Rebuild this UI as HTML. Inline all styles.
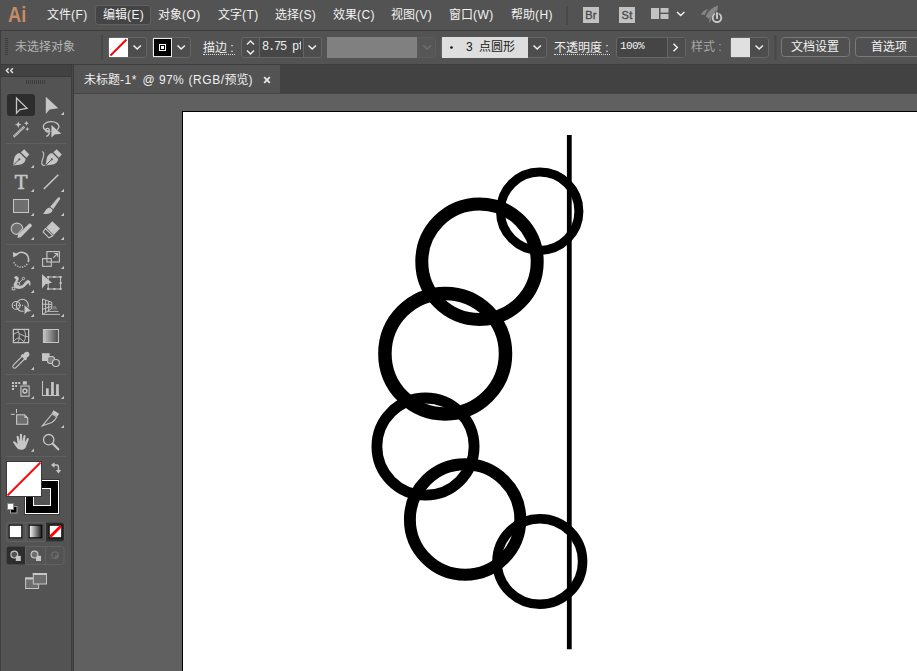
<!DOCTYPE html>
<html><head><meta charset="utf-8">
<style>
html,body{margin:0;padding:0;}
body{width:917px;height:671px;overflow:hidden;background:#5e5e5e;position:relative;font-family:"Liberation Sans","Noto Sans CJK SC",sans-serif;font-size:12px;color:#f0f0f0;}
.abs{position:absolute;}
#menubar{left:0;top:0;width:917px;height:30px;background:#535353;}
#menubar .mi{position:absolute;top:0;height:30px;line-height:31px;font-size:12px;color:#f2f2f2;white-space:nowrap;}
#ctrl{left:0;top:30px;width:917px;height:34px;background:#535353;border-top:1px solid #3c3c3c;box-sizing:border-box;}
#ctrl .t{position:absolute;white-space:nowrap;font-size:12px;line-height:20px;top:6px;height:20px;}
.grp{position:absolute;top:6px;height:21px;box-sizing:border-box;border:1px solid #6a6a6a;border-radius:3px;}
#tabbar{left:74px;top:64px;width:843px;height:30px;background:#424242;border-top:1px solid #3d3d3d;border-bottom:1px solid #454545;box-sizing:border-box;}
#tab{left:0;top:0;width:206px;height:28px;background:#535353;}
#tools{left:0;top:64px;width:74px;height:607px;background:#535353;border-top:1px solid #3a3a3a;box-sizing:border-box;}
#canvas{left:74px;top:94px;width:843px;height:577px;background:#606060;}
.la{letter-spacing:0.4px;}
.tt{top:1px;height:28px;line-height:28px;font-size:12px;color:#f0f0f0;white-space:nowrap;}
</style></head><body>
<div id="canvas" class="abs"></div>
<div id="art" class="abs" style="left:182px;top:111px;width:740px;height:570px;background:#fff;border:1px solid #000;box-sizing:border-box;"></div>
<svg class="abs" style="left:0;top:0" width="917" height="671" viewBox="0 0 917 671">
<g fill="none" stroke="#000">
<line x1="569.3" y1="135" x2="569.3" y2="649.3" stroke-width="4.8"/>
<circle cx="539.7" cy="211.2" r="39.2" stroke-width="9"/>
<circle cx="479.5" cy="261.7" r="57.7" stroke-width="13"/>
<circle cx="445.2" cy="353.7" r="60.3" stroke-width="13.5"/>
<circle cx="425.5" cy="446.6" r="48.6" stroke-width="10.8"/>
<circle cx="465.1" cy="519.5" r="55.2" stroke-width="11.9"/>
<circle cx="539.8" cy="561.5" r="42.8" stroke-width="9.5"/>
</g>
</svg>
<div id="menubar" class="abs">
<div class="mi" style="left:8.300px;top:-1px;font-size:22.800px;font-weight:bold;color:#c68c63;transform:scaleX(0.800);transform-origin:0 0;line-height:30px;">Ai</div>
<div class="mi" style="left:47px">文件<span class="la">(F)</span></div>
<div class="abs" style="left:95px;top:5px;width:56px;height:20px;box-sizing:border-box;border:1px solid #606060;border-radius:3px;background:#444;"></div>
<div class="mi" style="left:103px">编辑<span class="la">(E)</span></div>
<div class="mi" style="left:158px">对象<span class="la">(O)</span></div>
<div class="mi" style="left:218px">文字<span class="la">(T)</span></div>
<div class="mi" style="left:275px">选择<span class="la">(S)</span></div>
<div class="mi" style="left:333px">效果<span class="la">(C)</span></div>
<div class="mi" style="left:391px">视图<span class="la">(V)</span></div>
<div class="mi" style="left:449px">窗口<span class="la">(W)</span></div>
<div class="mi" style="left:511px">帮助<span class="la">(H)</span></div>
<div class="abs" style="left:566px;top:6px;width:2px;height:19px;background:#484848;"></div>
<div class="abs" style="left:583px;top:7px;width:16px;height:16px;background:#c2c2c2;color:#484848;font-size:11px;-webkit-text-stroke:0.350px #484848;line-height:17px;text-align:center;letter-spacing:0.2px;">Br</div>
<div class="abs" style="left:619px;top:7px;width:16px;height:16px;background:#c2c2c2;color:#484848;font-size:11px;-webkit-text-stroke:0.350px #484848;line-height:17px;text-align:center;letter-spacing:0.2px;">St</div>
<svg class="abs" style="left:645px;top:0" width="90" height="30" viewBox="645 0 90 30">
<rect x="651" y="8" width="8" height="11" fill="#c2c2c2"/><rect x="660.5" y="8" width="8" height="4.6" fill="#c2c2c2"/><rect x="660.5" y="14" width="8" height="5" fill="#c2c2c2"/>
<path d="M677 12 L680.7 15.5 L684.4 12" fill="none" stroke="#f0f0f0" stroke-width="1.5"/>
<path d="M718.100 5.700 C713 6.500 707.500 11.500 705.800 16.400 L708.800 18.800 C713.500 17 718 12 718.100 5.700 Z" fill="#858585"/>
<path d="M700.900 14.400 C702.500 11.500 705 9.500 708.300 9 C706.800 10.800 705.600 12.800 704.800 14.900 Z" fill="#858585"/>
<path d="M709.100 22.900 L709.300 19.200 L711.600 17.800 C711.600 19.800 710.600 21.600 709.100 22.900 Z" fill="#858585"/>
<circle cx="717" cy="17.700" r="5.400" fill="#535353"/>
<circle cx="717" cy="17.700" r="4.300" fill="none" stroke="#c8c8c8" stroke-width="1.900"/>
<rect x="715.200" y="11.400" width="3.600" height="6" fill="#535353"/>
<rect x="716" y="12.300" width="2" height="6.500" fill="#c8c8c8"/>
</svg>

</div>
<div id="ctrl" class="abs">
<svg class="abs" style="left:0;top:0" width="917" height="33" viewBox="0 31 917 33">
<g fill="#3c3c3c"><rect x="5" y="38" width="3" height="1"/><rect x="5" y="40" width="3" height="1"/><rect x="5" y="42" width="3" height="1"/><rect x="5" y="44" width="3" height="1"/><rect x="5" y="46" width="3" height="1"/><rect x="5" y="48" width="3" height="1"/><rect x="5" y="50" width="3" height="1"/><rect x="5" y="52" width="3" height="1"/><rect x="5" y="54" width="3" height="1"/></g>
<rect x="0" y="31" width="1" height="33" fill="#3e3e3e"/>
<rect x="101" y="35" width="2" height="25" fill="#474747"/>
<!-- fill group -->
<rect x="108.5" y="37.5" width="38" height="20" rx="2.5" fill="#4d4d4d" stroke="#666"/>
<rect x="109" y="38" width="19" height="19" fill="#fff"/>
<line x1="110.500" y1="55.500" x2="126.500" y2="39.500" stroke="#f00" stroke-width="2"/>
<path d="M133.500 45.500 L137.200 49 L140.900 45.500" fill="none" stroke="#f0f0f0" stroke-width="1.5"/>
<!-- stroke group -->
<rect x="152.500" y="37.500" width="38" height="20" rx="2.500" fill="#4d4d4d" stroke="#666"/>
<rect x="153.500" y="38.500" width="18" height="18" fill="#000" stroke="#e8e8e8"/>
<rect x="159.500" y="44.500" width="6" height="6" fill="none" stroke="#fff"/>
<rect x="161" y="46" width="3" height="3" fill="#fff"/>
<path d="M177.500 45.500 L181.200 49 L184.900 45.500" fill="none" stroke="#f0f0f0" stroke-width="1.5"/>
<!-- stroke weight -->
<rect x="241.500" y="37.500" width="80" height="20" rx="2.500" fill="#4d4d4d" stroke="#666"/>
<rect x="260" y="38" width="43.500" height="19" fill="#464646"/>
<line x1="259.500" y1="38" x2="259.500" y2="57" stroke="#666"/><line x1="303.500" y1="38" x2="303.500" y2="57" stroke="#666"/>
<path d="M247 44.500 L250.500 41 L254 44.500" fill="none" stroke="#f0f0f0" stroke-width="1.4"/>
<path d="M247 50.500 L250.500 54 L254 50.500" fill="none" stroke="#f0f0f0" stroke-width="1.4"/>
<path d="M308.500 45.500 L312.200 49 L315.900 45.500" fill="none" stroke="#f0f0f0" stroke-width="1.5"/>
<!-- gray bar -->
<rect x="327" y="37" width="90" height="21" fill="#808080"/>
<rect x="417.500" y="37.500" width="18" height="20" rx="2" fill="#565656" stroke="#5c5c5c"/>
<path d="M423.500 45.500 L427.200 49 L430.900 45.500" fill="none" stroke="#707070" stroke-width="1.5"/>
<!-- brush def -->
<rect x="441.500" y="37.500" width="105" height="20" rx="2.500" fill="#4d4d4d" stroke="#666"/>
<rect x="442" y="37" width="86" height="21" fill="#dedede"/>
<circle cx="451.500" cy="47.500" r="1.300" fill="#111"/>
<path d="M533.500 45.500 L537.200 49 L540.900 45.500" fill="none" stroke="#f0f0f0" stroke-width="1.5"/>
<!-- opacity -->
<rect x="616.500" y="37.500" width="69" height="20" rx="2.500" fill="#454545" stroke="#666"/>
<rect x="667.500" y="38" width="17.500" height="19" fill="#4d4d4d"/>
<line x1="667.500" y1="38" x2="667.500" y2="57" stroke="#666"/>
<path d="M673.500 43.700 L677.300 47.500 L673.500 51.300" fill="none" stroke="#f0f0f0" stroke-width="1.5"/>
<!-- style -->
<rect x="730.500" y="37.500" width="38" height="20" rx="2.500" fill="#4d4d4d" stroke="#666"/>
<rect x="731" y="38" width="19" height="19" fill="#e0e0e0"/>
<path d="M755.500 45.500 L759.200 49 L762.900 45.500" fill="none" stroke="#f0f0f0" stroke-width="1.5"/>
<rect x="774.500" y="35" width="2" height="25" fill="#474747"/>
<rect x="781.500" y="37.500" width="68" height="19" rx="3" fill="#505050" stroke="#7a7a7a"/>
<rect x="855.500" y="37.500" width="80" height="19" rx="3" fill="#505050" stroke="#7a7a7a"/>
</svg>
<div class="t" style="left:15px;color:#b4b4b4;">未选择对象</div>
<div class="t" style="left:203px;color:#f0f0f0;width:32px;border-bottom:1px dotted #ddd;height:16px;line-height:20px;top:7px;">描边 :</div>
<div class="t" style="left:262px;color:#ececec;font-family:'Liberation Mono','Noto Sans CJK SC',monospace;font-size:12px;width:38.500px;overflow:hidden;letter-spacing:-1.2px;">8.75 pt</div>
<div class="t" style="left:466px;color:#1a1a1a;">3</div>
<div class="t" style="left:479px;color:#1a1a1a;">点圆形</div>
<div class="t" style="left:554px;color:#f0f0f0;width:56px;border-bottom:1px dotted #ddd;height:16px;line-height:20px;top:7px;">不透明度 :</div>
<div class="t" style="left:620px;color:#f4f4f4;font-family:'Liberation Mono',monospace;font-size:11px;letter-spacing:-0.6px;top:5px;">100%</div>
<div class="t" style="left:691px;color:#a6a6a6;">样式 :</div>
<div class="t" style="left:791px;color:#f0f0f0;">文档设置</div>
<div class="t" style="left:871px;color:#f0f0f0;">首选项</div>
</div>
<div id="tabbar" class="abs"><div id="tab" class="abs"></div>
<div class="abs tt" style="left:10px;"><span>未标题</span><span style="letter-spacing:0.5px">-1*</span></div>
<div class="abs tt" style="left:68.500px;">@</div>
<div class="abs tt" style="left:85px;letter-spacing:0.3px">97%</div>
<div class="abs tt" style="left:114.500px;"><span style="letter-spacing:0.55px">(RGB/</span>预览<span>)</span></div>
<svg class="abs" style="left:188.500px;top:11px" width="8" height="8" viewBox="0 0 8 8"><path d="M1.200 1.200 L6.800 6.800 M6.800 1.200 L1.200 6.800" stroke="#e4e4e4" stroke-width="1.900" fill="none"/></svg>
</div>
<div id="tools" class="abs">
<svg class="abs" style="left:0;top:0" width="74" height="606" viewBox="0 65 74 606" font-family="'Liberation Serif',serif">
<rect x="0" y="65" width="71" height="11" fill="#424242"/>
<rect x="0" y="76" width="71" height="1" fill="#3a3a3a"/>
<rect x="71" y="65" width="3" height="606" fill="#3d3d3d"/><rect x="72" y="65" width="1" height="606" fill="#474747"/>
<rect x="0" y="65" width="1" height="606" fill="#3e3e3e"/>
<path d="M8.700 68.200 L6.500 70.600 L8.700 73 M12.900 68.200 L10.700 70.600 L12.900 73" fill="none" stroke="#e0e0e0" stroke-width="1.500"/>
<g fill="#3e3e3e"><rect x="26" y="80" width="1" height="4"/><rect x="28" y="80" width="1" height="4"/><rect x="30" y="80" width="1" height="4"/><rect x="32" y="80" width="1" height="4"/><rect x="34" y="80" width="1" height="4"/><rect x="36" y="80" width="1" height="4"/><rect x="38" y="80" width="1" height="4"/><rect x="40" y="80" width="1" height="4"/><rect x="42" y="80" width="1" height="4"/><rect x="44" y="80" width="1" height="4"/></g>
<g fill="#5f5f5f"><rect x="6" y="143" width="60" height="1"/><rect x="6" y="244" width="60" height="1"/><rect x="6" y="321" width="60" height="1"/><rect x="6" y="374" width="60" height="1"/><rect x="6" y="403" width="60" height="1"/><rect x="6" y="456" width="60" height="1"/></g>
<g fill="#c6c6c6"><path d="M64.0 111.7 V114.9 H60.8 Z"/><path d="M34.0 164.8 V168.0 H30.8 Z"/><path d="M34.0 188.7 V191.89999999999998 H30.8 Z"/><path d="M64.0 188.7 V191.89999999999998 H60.8 Z"/><path d="M34.0 212.8 V216.0 H30.8 Z"/><path d="M64.0 212.8 V216.0 H60.8 Z"/><path d="M34.0 236.7 V239.89999999999998 H30.8 Z"/><path d="M64.0 236.7 V239.89999999999998 H60.8 Z"/><path d="M34.0 265.9 V269.09999999999997 H30.8 Z"/><path d="M64.0 265.9 V269.09999999999997 H60.8 Z"/><path d="M34.0 289.8 V293.0 H30.8 Z"/><path d="M34.0 313.7 V316.9 H30.8 Z"/><path d="M64.0 313.7 V316.9 H60.8 Z"/><path d="M34.0 366.8 V370.0 H30.8 Z"/><path d="M34.0 395.9 V399.09999999999997 H30.8 Z"/><path d="M64.0 395.9 V399.09999999999997 H60.8 Z"/><path d="M64.0 424.9 V428.09999999999997 H60.8 Z"/><path d="M34.0 448.6 V451.8 H30.8 Z"/></g>
<!-- selection -->
<rect x="7" y="94" width="28" height="22" rx="3" fill="#2d2d2d"/>
<path d="M16.500 98 V113.200 L19.900 109.500 L27 108.400 Z" fill="none" stroke="#c6c6c6" stroke-width="1.300"/>
<path d="M45.800 96.800 V114 L49.600 109.400 L58.300 108.200 Z" fill="#c6c6c6"/>
<!-- magic wand -->
<g stroke="#c6c6c6" stroke-width="2.600" stroke-dasharray="1.300 0.400"><line x1="13.700" y1="136.800" x2="24.300" y2="126.600"/></g>
<g fill="#c6c6c6">
<path d="M18.300 121.300 L19.200 123.700 L21.700 124.600 L19.200 125.500 L18.300 127.900 L17.400 125.500 L14.900 124.600 L17.400 123.700 Z"/>
<path d="M26.400 120.800 L27.100 122.600 L28.900 123.300 L27.100 124 L26.400 125.800 L25.700 124 L23.900 123.300 L25.700 122.600 Z"/>
<path d="M27.300 126.900 L27.900 128.500 L29.500 129.100 L27.900 129.700 L27.300 131.300 L26.700 129.700 L25.100 129.100 L26.700 128.500 Z"/>
</g>
<!-- lasso -->
<path d="M51.400 125.100 V137.700 L54.600 134.600 L61.300 133.800 Z" fill="#c6c6c6"/>
<g fill="none" stroke="#c6c6c6" stroke-width="1.300">
<path d="M50.500 131.300 C46 131.200 43.200 129.200 43.300 126.600 C43.500 123.700 47 121.700 51.200 121.700 C55.600 121.700 58.900 123.800 58.900 126.600 C58.900 127.800 58.300 128.900 57.300 129.700"/>
<circle cx="47.500" cy="130.200" r="1.800"/>
<path d="M49 131.400 C49.700 133.400 48.800 135.600 46.200 136.300"/>
</g>
<!-- pen -->
<g id="pen">
<path d="M13 165.600 L14.300 158 C14.900 155.300 17 153.400 19.700 153 L25.700 159 C25.300 161.700 23.400 163.800 20.700 164.400 Z" fill="#c6c6c6"/>
<path d="M13.300 165.300 L18.800 159.800" stroke="#535353" stroke-width="1" fill="none"/>
<circle cx="19.300" cy="159.300" r="1.100" fill="#535353"/>
<path d="M20.900 152.300 L24.200 149.300 L29.300 154.400 L26.400 157.700 Z" fill="#c6c6c6"/>
</g>
<use href="#pen" x="32.500" y="0"/>
<path d="M42.300 151.400 C46.500 153.500 41 160.500 41.800 163.500 C42.200 165.200 43.700 165.700 44.800 165.400" fill="none" stroke="#c6c6c6" stroke-width="1.100"/>
<!-- T -->
<text x="21.100" y="188.900" font-size="19" text-anchor="middle" fill="#c6c6c6" stroke="#c6c6c6" stroke-width="0.550" style="font-family:'DejaVu Serif','Liberation Serif',serif">T</text>
<line x1="43.800" y1="189" x2="58.300" y2="174.800" stroke="#c6c6c6" stroke-width="1.600"/>
<!-- rect -->
<rect x="13.500" y="199.500" width="15" height="13" fill="#6e6e6e" stroke="#c6c6c6"/>
<!-- brush -->
<path d="M58.200 197.700 C59.300 197 60.300 198 59.700 199.200 L53.300 208.700 L50.500 206.700 Z" fill="#c6c6c6" stroke="#c6c6c6" stroke-width="0.600" stroke-linejoin="round"/>
<path d="M49.700 207.500 L52.400 209.500 C52.900 212.300 49.800 214.400 42.900 213.900 C45.400 212.600 44.900 208.500 49.700 207.500 Z" fill="#c6c6c6"/>
<!-- shaper -->
<path d="M17.500 234.300 C13.800 234.600 11.200 232 11.200 228.800 C11.200 225.600 13.800 223.100 17 223.100 C20 223.100 22.500 225.300 22.800 228.300 L17.500 234.300 Z" fill="#6e6e6e" stroke="#c6c6c6" stroke-width="1.100"/>
<path d="M17.500 237.900 L18 234.400 L29 223.800 C30.200 222.800 32.600 225.100 31.600 226.300 L20.900 237.200 Z" fill="#c6c6c6"/>
<!-- eraser -->
<path d="M52.300 221.200 L60 228.600 L53.800 235 L46.200 227.600 Z" fill="#c6c6c6"/>
<path d="M45.400 228.500 L52.900 235.800 L49 237.800 L43.100 232 Z" fill="none" stroke="#c6c6c6" stroke-width="1.100"/>
<!-- rotate -->
<path d="M16.300 254.600 C20.500 250 28.600 252.800 28.600 259.500 C28.600 260.500 28.500 261.300 28.200 262.100" fill="none" stroke="#c6c6c6" stroke-width="1.600"/>
<path d="M12.900 252 L18.600 254.600 L13.300 257.600 Z" fill="#c6c6c6"/>
<path d="M27.200 264 C25 267.200 20 268.300 16.300 265.500 C15 264.500 14 263 13.600 261.500" fill="none" stroke="#c6c6c6" stroke-width="1.500" stroke-dasharray="1.200 1.300"/>
<!-- scale -->
<g fill="none" stroke="#c6c6c6" stroke-width="1.100">
<rect x="46.900" y="251.600" width="12.500" height="10.400"/>
<rect x="42.600" y="258.600" width="8.700" height="7.700"/>
<path d="M53.300 257.800 L57.500 253.600 M54.300 253.500 H57.600 V256.800"/>
</g>
<!-- width/warp -->
<path d="M14.300 277.800 C15.500 275.500 18.300 276.300 18.300 278.800 C18.300 280.500 16.800 281.300 16.500 283.500 C16.300 286 19.500 287 22 285.700 C25 284.200 25.500 280.200 28.300 280.400 C30.300 280.600 30.300 283.500 29.800 285.400 C29 280.800 27.200 283.800 25.300 285.800 C22.500 288.800 16 289.600 14.400 286.200 C13 283.200 16.500 281.500 16.200 279.400 C16 278 14.800 278.300 14.300 277.800 Z" fill="#c6c6c6" stroke="#c6c6c6" stroke-width="0.800"/>
<line x1="13.500" y1="288.500" x2="23.300" y2="278.700" stroke="#c6c6c6" stroke-width="0.900"/>
<rect x="12.200" y="287.200" width="2.600" height="2.600" fill="#535353" stroke="#c6c6c6" stroke-width="0.900"/>
<circle cx="18.100" cy="284" r="1.500" fill="#535353" stroke="#c6c6c6" stroke-width="0.900"/>
<circle cx="23.400" cy="278.500" r="1.200" fill="#535353" stroke="#c6c6c6" stroke-width="0.900"/>
<!-- free transform -->
<rect x="48.200" y="277" width="12.400" height="12" fill="none" stroke="#c6c6c6" stroke-width="1"/>
<g fill="#c6c6c6"><rect x="47.200" y="276" width="2" height="2"/><rect x="53.400" y="276" width="2" height="2"/><rect x="59.600" y="276" width="2" height="2"/><rect x="59.600" y="282" width="2" height="2"/><rect x="47.200" y="288" width="2" height="2"/><rect x="53.400" y="288" width="2" height="2"/><rect x="59.600" y="288" width="2" height="2"/></g>
<path d="M42 274.300 V288.500 L45.400 284.200 L52 282.800 Z" fill="#c6c6c6"/>
<!-- shape builder -->
<g fill="none" stroke="#c6c6c6" stroke-width="1.100">
<circle cx="22.300" cy="305.300" r="6"/>
<circle cx="16.100" cy="305.400" r="3.900"/>
<line x1="14" y1="305.400" x2="24" y2="305.400" stroke-dasharray="1 1"/>
</g>
<path d="M24.100 304.500 V315.200 L27 312.200 L31.900 311.200 Z" fill="#c6c6c6" stroke="#535353" stroke-width="0.800"/>
<!-- perspective grid -->
<g fill="none" stroke="#c6c6c6" stroke-width="1">
<path d="M42.500 299 L51.800 302.300 V308.400 L42.500 314.600 Z"/>
<path d="M45.600 300.200 V312.500 M48.700 301.300 V310.400 M42.500 304.200 L51.800 304.400 M42.500 309.300 L51.800 306.400"/>
<path d="M42.500 314.400 H60 M47.500 311.400 H58.500" stroke-width="0.900"/>
</g>
<path d="M53.200 306 H55.800 L57.300 309.500 H52 Z" fill="#7a7a7a"/>
<!-- mesh -->
<g fill="none" stroke="#c6c6c6" stroke-width="0.900">
<rect x="13.400" y="329.400" width="15.200" height="13.200" fill="#484848" stroke-width="1.200"/>
<path d="M17.300 329.400 C18.600 331.500 19.600 334.500 19.300 337.800 C19.100 339.500 18.500 341 17.700 342.500"/>
<path d="M23.700 329.400 C25.300 332 25.800 334.500 25.500 336.800 C25.300 339 24.400 341 23.400 342.500"/>
<path d="M13.400 334.400 C15.200 333.300 16.800 332.500 18.400 331.900"/>
<path d="M19.300 333.600 L25.300 336.500"/>
<path d="M13.600 341.300 C15.300 339.300 17 338.300 19.200 337.900 L23.800 341.500"/>
<path d="M25.500 336.500 H28.600"/>
</g>
<!-- gradient -->
<defs><linearGradient id="gr" x1="0" x2="1" y1="0" y2="0"><stop offset="0" stop-color="#c6c6c6"/><stop offset="1" stop-color="#484848"/></linearGradient>
<linearGradient id="gr2" x1="0" x2="1" y1="0" y2="0"><stop offset="0" stop-color="#ffffff"/><stop offset="1" stop-color="#1a1a1a"/></linearGradient></defs>
<rect x="43.400" y="329.500" width="15" height="13" fill="url(#gr)" stroke="#c6c6c6"/>
<!-- eyedropper -->
<path d="M13.300 367.700 C12.500 366.800 12.800 365.600 13.600 364.800 L22.800 355.600 L25.400 358.200 L16.200 367.400 C15.400 368.200 14.200 368.500 13.300 367.700 Z" fill="none" stroke="#c6c6c6" stroke-width="1.100"/>
<path d="M20.700 355.600 L22.300 354 L23 354.700 L24.700 352.600 C26 351.300 27.800 351.500 28.700 352.400 C29.600 353.300 29.800 355.100 28.500 356.400 L26.400 358.100 L27.100 358.800 L25.500 360.400 Z" fill="#c6c6c6"/>
<!-- blend -->
<rect x="42" y="353.200" width="7.600" height="7.800" fill="#c6c6c6"/>
<rect x="47.500" y="356.500" width="7" height="7" rx="2.500" fill="#7c7c7c" stroke="#c6c6c6" stroke-width="1.100"/>
<circle cx="55.900" cy="363" r="3.500" fill="#535353" stroke="#c6c6c6" stroke-width="1.100"/>
<!-- symbol sprayer -->
<g fill="#c6c6c6"><rect x="12" y="382" width="2" height="2"/><rect x="15.100" y="382" width="2" height="2"/><rect x="18.200" y="382" width="2" height="2"/><rect x="12" y="385" width="2" height="2"/><rect x="15.100" y="385" width="2" height="2"/><rect x="12" y="388" width="2" height="2"/>
<rect x="22.800" y="381.300" width="4" height="3.300"/></g>
<rect x="20.900" y="386" width="8.200" height="10.200" fill="none" stroke="#c6c6c6" stroke-width="1.100"/>
<circle cx="24.900" cy="391" r="2" fill="none" stroke="#c6c6c6" stroke-width="1.400"/>
<!-- graph -->
<g fill="#c6c6c6"><rect x="42" y="381" width="1" height="15"/><rect x="42" y="395" width="17.500" height="1"/><rect x="46" y="388.300" width="2.700" height="7"/><rect x="51.100" y="382" width="2.700" height="13.500"/><rect x="56.100" y="384.200" width="2.700" height="11"/></g>
<!-- artboard -->
<path d="M16.600 414.700 H24.500 L27.700 417.900 V424.300 H16.600 Z" fill="#6e6e6e" stroke="#c6c6c6" stroke-width="1.100"/>
<path d="M24.500 414.700 V417.900 H27.700 Z" fill="#c6c6c6"/>
<rect x="16" y="409" width="1" height="4" fill="#c6c6c6"/><rect x="10.800" y="413.800" width="4" height="1" fill="#c6c6c6"/>
<!-- slice -->
<path d="M42.300 425.800 L52.100 414 L56.700 416.900 C55.200 419.800 52.500 422.300 49.600 423.300 Z" fill="none" stroke="#c6c6c6" stroke-width="1.100"/>
<path d="M53.600 410.200 L59.100 413.800 L57.300 416.600 L51.800 413.200 Z" fill="#c6c6c6"/>
<!-- hand -->
<path d="M12.800 442 C13.500 441 15 441.200 15.800 442.200 L17.600 444.300 L16.600 436.800 C16.500 435.400 18.300 435.200 18.600 436.500 L19.800 441.600 L19.900 434.800 C19.900 433.400 21.900 433.400 22 434.800 L22.300 441.400 L23.600 435.800 C23.900 434.500 25.700 434.800 25.500 436.200 L24.900 442.300 L27 438.600 C27.700 437.500 29.200 438.300 28.700 439.500 L26.500 445.500 C25.800 448 24.500 449.800 21.500 449.800 C18.500 449.800 17.200 448.500 15.800 446.500 Z" fill="#c6c6c6"/>
<!-- zoom -->
<circle cx="48.700" cy="439.700" r="5.200" fill="none" stroke="#c6c6c6" stroke-width="1.300"/>
<line x1="52.800" y1="443.800" x2="58.300" y2="449.300" stroke="#c6c6c6" stroke-width="2.200" stroke-linecap="round"/>
<!-- fill/stroke -->
<rect x="24.500" y="479.500" width="35" height="35" fill="#000" stroke="#3a3a3a" stroke-width="1"/><rect x="25.500" y="480.500" width="33" height="33" fill="#000" stroke="#fff" stroke-width="1"/>
<rect x="33.500" y="488.500" width="17" height="17" fill="#535353" stroke="#fff" stroke-width="1"/>
<rect x="6.500" y="461.500" width="35" height="35" fill="#fff" stroke="#3a3a3a" stroke-width="1"/>
<line x1="7.500" y1="495.500" x2="40.500" y2="462.500" stroke="#f00" stroke-width="1.800"/>
<path d="M52.800 465 H56.500 C58 465 58.500 466 58.500 467.500 V471" fill="none" stroke="#c6c6c6" stroke-width="1.400"/>
<path d="M51 465 L54.500 462.300 V467.700 Z M58.500 473.500 L55.800 470 H61.200 Z" fill="#c6c6c6"/>
<rect x="10.500" y="506.500" width="6.500" height="6.500" fill="#000" stroke="#a0a0a0" stroke-width="1"/>
<rect x="7.500" y="503.500" width="6" height="6" fill="#fff" stroke="#888" stroke-width="1"/>
<!-- color buttons -->
<rect x="6.500" y="522.500" width="57.500" height="19" rx="2.500" fill="none" stroke="#616161"/>
<path d="M45.500 522.500 H61.500 Q64 522.500 64 525 V539 Q64 541.500 61.500 541.500 H45.500 Z" fill="#2d2d2d"/>
<line x1="25.500" y1="523" x2="25.500" y2="541" stroke="#616161"/><line x1="45.500" y1="523" x2="45.500" y2="541" stroke="#616161"/>
<rect x="9.200" y="525.200" width="12.600" height="12.600" fill="#fff" stroke="#000" stroke-width="1"/>
<rect x="29.200" y="525.200" width="12.600" height="12.600" fill="url(#gr2)" stroke="#000" stroke-width="1"/>
<rect x="49.200" y="525.200" width="12.600" height="12.600" fill="#fff" stroke="#000" stroke-width="1"/>
<line x1="50.200" y1="536.800" x2="60.800" y2="526.200" stroke="#f00" stroke-width="2.800"/>
<!-- draw modes -->
<rect x="6.500" y="546.500" width="57.500" height="18" rx="2.500" fill="none" stroke="#616161"/>
<path d="M25.500 546.500 H9 Q6.500 546.500 6.500 549 V562 Q6.500 564.500 9 564.500 H25.500 Z" fill="#2d2d2d"/>
<line x1="25.500" y1="547" x2="25.500" y2="564" stroke="#616161"/><line x1="45.500" y1="547" x2="45.500" y2="564" stroke="#616161"/>
<circle cx="14.300" cy="554.600" r="3.400" fill="#535353" stroke="#c6c6c6" stroke-width="1.200"/>
<rect x="15.800" y="555.800" width="5" height="5.200" fill="#c6c6c6"/>
<rect x="36" y="555.800" width="5" height="5.200" fill="#c6c6c6"/>
<circle cx="34.500" cy="554.600" r="3.400" fill="#6e6e6e" stroke="#c6c6c6" stroke-width="1.200"/>
<circle cx="55" cy="555.200" r="3.300" fill="none" stroke="#6c6c6c" stroke-width="1.200"/>
<path d="M55 555.200 V558.500 A3.300 3.300 0 0 0 58.300 555.200 Z" fill="#6c6c6c"/>
<!-- screen mode -->
<rect x="25.600" y="578" width="13" height="10.500" fill="#6e6e6e" stroke="#c6c6c6" stroke-width="1"/>
<rect x="25.100" y="577.500" width="14" height="2" fill="#c6c6c6"/>
<rect x="33.300" y="573.500" width="13.200" height="10.500" fill="#6e6e6e" stroke="#c6c6c6" stroke-width="1"/>
<rect x="32.800" y="573" width="14.200" height="2" fill="#c6c6c6"/>
</svg>
</div>
</body></html>
